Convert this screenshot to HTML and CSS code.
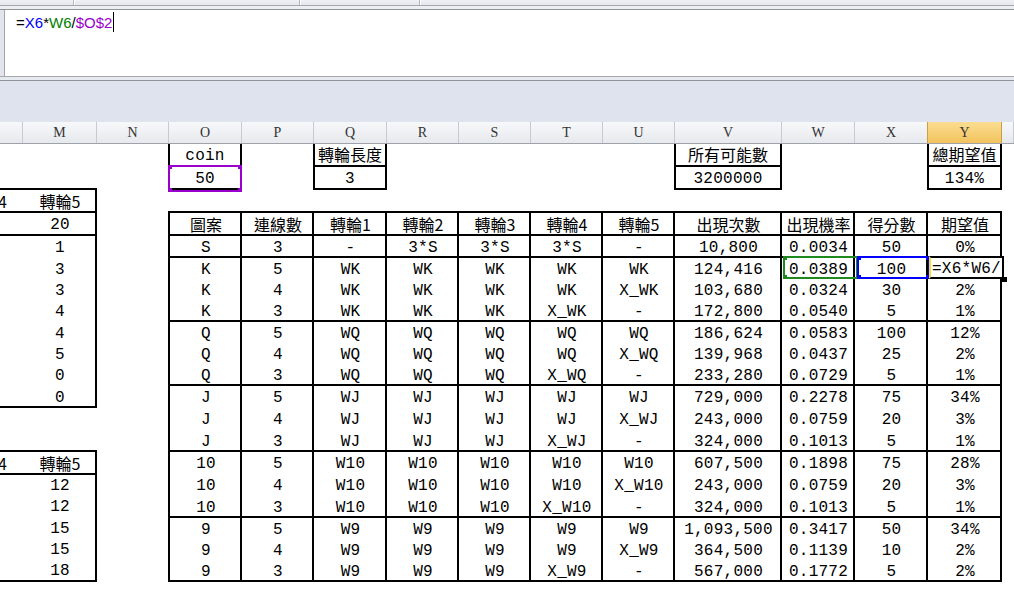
FILE: index.html
```html
<!DOCTYPE html>
<html lang="zh-Hant">
<head>
<meta charset="utf-8">
<title>Sheet</title>
<link rel="stylesheet" href="styles.css">
</head>
<body>
<div class="topstrip"><div class="seg seg1"></div><div class="seg seg2"></div><div class="seg seg3"></div></div>
<div class="fb-top"></div>
<div class="formula-bar">
  <div class="fb-gutter"></div>
  <div class="fb-line"><span class="fb-text">=<span class="rx">X6</span>*<span class="rw">W6</span>/<span class="ro">$O$2</span></span><span class="caret"></span></div>
</div>
<div class="fb-bottom"></div>
<div class="lav"></div>
<div class="colheads">
  <div class="ch">L</div><div class="ch">M</div><div class="ch">N</div><div class="ch">O</div><div class="ch">P</div><div class="ch">Q</div><div class="ch">R</div><div class="ch">S</div><div class="ch">T</div><div class="ch">U</div><div class="ch">V</div><div class="ch">W</div><div class="ch">X</div><div class="ch on">Y</div><div class="ch"></div>
</div>
<div class="sheet">
  <div class="box box-coin">
    <div class="bc">coin</div>
    <div class="bc">50<span class="sel sel-o"><i class="k tl"></i><i class="k tr"></i><i class="k bl"></i><i class="k br"></i></span></div>
  </div>
  <div class="box box-len">
    <div class="bc cjk">轉輪長度</div>
    <div class="bc">3</div>
  </div>
  <div class="box box-total">
    <div class="bc cjk">所有可能數</div>
    <div class="bc">3200000</div>
  </div>
  <div class="box box-ev">
    <div class="bc cjk">總期望值</div>
    <div class="bc">134%</div>
  </div>

  <div class="lt lt-top">
    <div class="lr h23 sep hd"><div class="lc">轉輪4</div><div class="mc">轉輪5</div></div>
    <div class="lr h23 sep"><div class="lc"></div><div class="mc">20</div></div>
    <div class="lr"><div class="lc"></div><div class="mc">1</div></div>
    <div class="lr h21"><div class="lc"></div><div class="mc">3</div></div>
    <div class="lr h21"><div class="lc"></div><div class="mc">3</div></div>
    <div class="lr"><div class="lc"></div><div class="mc">4</div></div>
    <div class="lr h21"><div class="lc"></div><div class="mc">4</div></div>
    <div class="lr h21"><div class="lc"></div><div class="mc">5</div></div>
    <div class="lr"><div class="lc"></div><div class="mc">0</div></div>
    <div class="lr sep"><div class="lc"></div><div class="mc">0</div></div>
  </div>

  <div class="lt lt-bot">
    <div class="lr h23 sep hd"><div class="lc">轉輪4</div><div class="mc">轉輪5</div></div>
    <div class="lr h21 tight"><div class="lc"></div><div class="mc">12</div></div>
    <div class="lr tight"><div class="lc"></div><div class="mc">12</div></div>
    <div class="lr h21 tight"><div class="lc"></div><div class="mc">15</div></div>
    <div class="lr h21 tight"><div class="lc"></div><div class="mc">15</div></div>
    <div class="lr sep tight"><div class="lc"></div><div class="mc">18</div></div>
  </div>

  <div class="main">
    <div class="band hdr">
      <div class="c">圖案</div><div class="c">連線數</div><div class="c">轉輪1</div><div class="c">轉輪2</div><div class="c">轉輪3</div><div class="c">轉輪4</div><div class="c">轉輪5</div><div class="c">出現次數</div><div class="c">出現機率</div><div class="c">得分數</div><div class="c">期望值</div>
    </div>
    <div class="band b1">
      <div class="c"><p>S</p></div><div class="c"><p>3</p></div><div class="c"><p>-</p></div><div class="c"><p>3*S</p></div><div class="c"><p>3*S</p></div><div class="c"><p>3*S</p></div><div class="c"><p>-</p></div><div class="c"><p>10,800</p></div><div class="c"><p>0.0034</p></div><div class="c"><p>50</p></div><div class="c"><p>0%</p></div>
    </div>
    <div class="band b3">
      <div class="c"><p>K</p><p>K</p><p>K</p></div>
      <div class="c"><p>5</p><p>4</p><p>3</p></div>
      <div class="c"><p>WK</p><p>WK</p><p>WK</p></div>
      <div class="c"><p>WK</p><p>WK</p><p>WK</p></div>
      <div class="c"><p>WK</p><p>WK</p><p>WK</p></div>
      <div class="c"><p>WK</p><p>WK</p><p>X_WK</p></div>
      <div class="c"><p>WK</p><p>X_WK</p><p>-</p></div>
      <div class="c"><p>124,416</p><p>103,680</p><p>172,800</p></div>
      <div class="c"><p>0.0389<span class="sel sel-g"><i class="k tl"></i><i class="k bl"></i></span></p><p>0.0324</p><p>0.0540</p></div>
      <div class="c"><p>100<span class="sel sel-b"><i class="k tl"></i><i class="k tr"></i><i class="k bl"></i><i class="k br"></i></span></p><p>30</p><p>5</p></div>
      <div class="c"><p><span class="editbox">=X6*W6/<i class="fill"></i></span></p><p>2%</p><p>1%</p></div>
    </div>
    <div class="band b3">
      <div class="c"><p>Q</p><p>Q</p><p>Q</p></div>
      <div class="c"><p>5</p><p>4</p><p>3</p></div>
      <div class="c"><p>WQ</p><p>WQ</p><p>WQ</p></div>
      <div class="c"><p>WQ</p><p>WQ</p><p>WQ</p></div>
      <div class="c"><p>WQ</p><p>WQ</p><p>WQ</p></div>
      <div class="c"><p>WQ</p><p>WQ</p><p>X_WQ</p></div>
      <div class="c"><p>WQ</p><p>X_WQ</p><p>-</p></div>
      <div class="c"><p>186,624</p><p>139,968</p><p>233,280</p></div>
      <div class="c"><p>0.0583</p><p>0.0437</p><p>0.0729</p></div>
      <div class="c"><p>100</p><p>25</p><p>5</p></div>
      <div class="c"><p>12%</p><p>2%</p><p>1%</p></div>
    </div>
    <div class="band b3w">
      <div class="c"><p>J</p><p>J</p><p>J</p></div>
      <div class="c"><p>5</p><p>4</p><p>3</p></div>
      <div class="c"><p>WJ</p><p>WJ</p><p>WJ</p></div>
      <div class="c"><p>WJ</p><p>WJ</p><p>WJ</p></div>
      <div class="c"><p>WJ</p><p>WJ</p><p>WJ</p></div>
      <div class="c"><p>WJ</p><p>WJ</p><p>X_WJ</p></div>
      <div class="c"><p>WJ</p><p>X_WJ</p><p>-</p></div>
      <div class="c"><p>729,000</p><p>243,000</p><p>324,000</p></div>
      <div class="c"><p>0.2278</p><p>0.0759</p><p>0.1013</p></div>
      <div class="c"><p>75</p><p>20</p><p>5</p></div>
      <div class="c"><p>34%</p><p>3%</p><p>1%</p></div>
    </div>
    <div class="band b3w">
      <div class="c"><p>10</p><p>10</p><p>10</p></div>
      <div class="c"><p>5</p><p>4</p><p>3</p></div>
      <div class="c"><p>W10</p><p>W10</p><p>W10</p></div>
      <div class="c"><p>W10</p><p>W10</p><p>W10</p></div>
      <div class="c"><p>W10</p><p>W10</p><p>W10</p></div>
      <div class="c"><p>W10</p><p>W10</p><p>X_W10</p></div>
      <div class="c"><p>W10</p><p>X_W10</p><p>-</p></div>
      <div class="c"><p>607,500</p><p>243,000</p><p>324,000</p></div>
      <div class="c"><p>0.1898</p><p>0.0759</p><p>0.1013</p></div>
      <div class="c"><p>75</p><p>20</p><p>5</p></div>
      <div class="c"><p>28%</p><p>3%</p><p>1%</p></div>
    </div>
    <div class="band b3">
      <div class="c"><p>9</p><p>9</p><p>9</p></div>
      <div class="c"><p>5</p><p>4</p><p>3</p></div>
      <div class="c"><p>W9</p><p>W9</p><p>W9</p></div>
      <div class="c"><p>W9</p><p>W9</p><p>W9</p></div>
      <div class="c"><p>W9</p><p>W9</p><p>W9</p></div>
      <div class="c"><p>W9</p><p>W9</p><p>X_W9</p></div>
      <div class="c"><p>W9</p><p>X_W9</p><p>-</p></div>
      <div class="c"><p>1,093,500</p><p>364,500</p><p>567,000</p></div>
      <div class="c"><p>0.3417</p><p>0.1139</p><p>0.1772</p></div>
      <div class="c"><p>50</p><p>10</p><p>5</p></div>
      <div class="c"><p>34%</p><p>2%</p><p>2%</p></div>
    </div>
  </div>
</div>
</body>
</html>
```

FILE: styles.css
```css
* { box-sizing: border-box; margin: 0; padding: 0; }
html, body { width: 1014px; height: 591px; overflow: hidden; background: #fff; }
body {
  font-family: "Liberation Mono", "Noto Sans CJK TC", monospace;
  font-size: 16px;
  letter-spacing: 0.25px;
  color: #000;
}

/* window chrome */
.topstrip { height: 5px; display: flex; background: linear-gradient(#eef1f5, #e3e7ec); }
.seg { height: 5px; border-right: 1px solid #b4b9c1; box-shadow: 1px 0 0 #fff; }
.seg1 { width: 74px; }
.seg2 { width: 226px; }
.seg3 { width: 120px; }
.fb-top { height: 5px; border-top: 1px solid #a5a8ad; border-bottom: 1px solid #8f9297; background: #eceef1; }
.formula-bar { height: 66px; display: flex; background: #fff; }
.fb-gutter { width: 5px; background: #e2e6ec; border-right: 1px solid #a3a7ad; }
.fb-line {
  display: flex; align-items: flex-start;
  padding: 2px 0 0 11px;
  font-family: "Liberation Sans", "Noto Sans CJK TC", sans-serif;
  font-size: 15px; letter-spacing: 0;
}
.fb-text { line-height: 18px; margin-top: 2px; white-space: pre; }
.caret { width: 1px; height: 20px; background: #000; margin-left: 1px; }
.rx { color: #0000ff; }
.rw { color: #008000; }
.ro { color: #9900cc; }
.fb-bottom { height: 5px; border-top: 1px solid #a5a8ad; border-bottom: 1px solid #8f9297; background: #e7eaef; }
.lav { height: 41px; background: #dfe3ee; }

/* column headers */
.colheads {
  display: grid;
  grid-template-columns: 73px 74px 72px 73px 72px 73px 72px 72px 72px 72px 107px 73px 73px 74px 1fr;
  height: 22px; width: 1064px; margin-left: -50px;
  border-bottom: 1px solid #9fa3a9;
  background: linear-gradient(#f7f8fa, #e6e9ed);
}
.ch {
  border-right: 1px solid #c7cad0;
  display: flex; align-items: center; justify-content: center;
  padding-top: 1px;
  font-family: "Liberation Serif", serif; font-size: 14px; letter-spacing: 0;
  color: #333;
}
.ch.on {
  background: linear-gradient(#fbdd91, #f2c25d);
  border-right-color: #c9a04a;
  box-shadow: -1px 0 0 #c9a04a;
}

/* sheet */
.sheet {
  display: grid;
  grid-template-columns: 73px 74px 72px 73px 72px 73px 72px 72px 72px 72px 107px 73px 73px 74px 1fr;
  grid-template-rows: 23px 23px 23px 23px 22px 21px 21px 22px 21px 21px 22px 22px 22px 22px 23px 21px 22px 21px 21px 22px 1fr;
  width: 1064px; height: 447px; margin-left: -50px;
}

/* small boxes at the top */
.box {
  margin-left: -1px;
  border: 2px solid #000; border-top: none;
  display: flex; flex-direction: column;
}
.box-coin { grid-column: 4; grid-row: 1 / 3; }
.box-len { grid-column: 6; grid-row: 1 / 3; }
.box-total { grid-column: 11; grid-row: 1 / 3; }
.box-ev { grid-column: 14; grid-row: 1 / 3; }
.bc {
  position: relative;
  height: 23px; border-bottom: 2px solid #000;
  text-align: center; line-height: 21px; padding-top: 2px; white-space: nowrap;
}
.bc + .bc { border-bottom: none; flex: 1; }
.bc.cjk { font-family: "Noto Sans CJK TC", sans-serif; letter-spacing: 0; padding-top: 0; }

/* reference highlights */
.sel { position: absolute; border: 2px solid; }
.sel-o { top: -2px; left: -2px; right: -2px; bottom: -2px; border-color: #9900cc; color: #9900cc; }
.sel-g { top: -2px; left: -1px; width: 75px; height: 23px; border-color: #1e8a1e; color: #1e8a1e; }
.sel-b { top: -2px; left: 0; width: 73px; height: 23px; border-color: #0000ff; color: #0000ff; }
.k { position: absolute; width: 4px; height: 4px; background: currentColor; }
.k.tl { left: -2px; top: -2px; }
.k.tr { right: -2px; top: -2px; }
.k.bl { left: -2px; bottom: -2px; }
.k.br { right: -2px; bottom: -2px; }

.editbox {
  position: absolute; top: -2px; left: -1px; width: 75px; height: 23px;
  background: #fff;
  border: 2px solid #000; border-left-color: #f7e21a;
  text-align: left; line-height: 21px; padding: 1px 0 0 1px;
  white-space: nowrap; z-index: 2;
}
.fill { position: absolute; right: -5px; bottom: -5px; width: 5px; height: 5px; background: #000; }

/* left tables */
.lt {
  margin-top: -2px;
  border-top: 2px solid #000; border-right: 2px solid #000;
  display: flex; flex-direction: column;
}
.lt-top { grid-column: 1 / 3; grid-row: 3 / 13; }
.lt-bot { grid-column: 1 / 3; grid-row: 15 / 21; }
.lr { display: grid; grid-template-columns: 73px 1fr; height: 22px; }
.lr.h21 { height: 21px; }
.lr.h23 { height: 23px; }
.lr.sep { border-bottom: 2px solid #000; }
.lr > div { text-align: center; line-height: 21px; padding-top: 2px; white-space: nowrap; }
.lr.tight > div { padding-top: 1px; }
.lr .mc { padding-left: 2px; }
.lr.hd > div { font-family: "Noto Sans CJK TC", sans-serif; letter-spacing: 0; padding-top: 1px; }

/* main table */
.main {
  grid-column: 4 / 15; grid-row: 4 / 21;
  margin-top: -2px; margin-left: -1px;
  border-top: 2px solid #000; border-left: 2px solid #000;
  display: flex; flex-direction: column;
}
.band {
  display: grid;
  grid-template-columns: 72px 72px 73px 72px 72px 72px 72px 107px 73px 73px 74px;
  border-bottom: 2px solid #000;
}
.band.hdr { height: 23px; }
.band.b1 { height: 22px; }
.band.b3 { height: 64px; }
.band.b3w { height: 66px; }
.c { border-right: 2px solid #000; padding-left: 2px; text-align: center; white-space: nowrap; }
.c p { position: relative; height: 21px; line-height: 21px; padding-top: 2px; }
.b3w .c p { height: 22px; }
.hdr .c { font-family: "Noto Sans CJK TC", sans-serif; letter-spacing: 0; line-height: 21px; padding-top: 1px; }
```
